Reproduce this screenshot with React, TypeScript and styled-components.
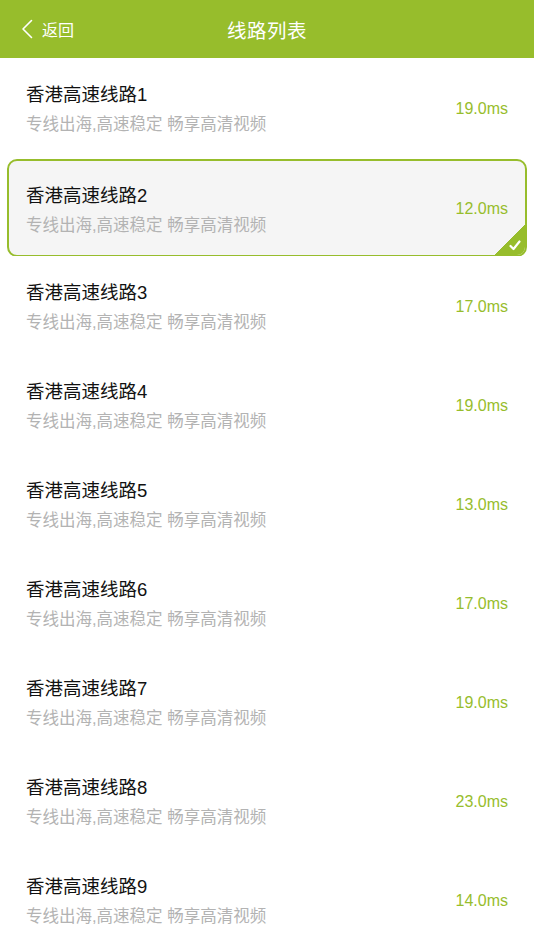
import React, { useState } from "react";
import styled, { createGlobalStyle } from "styled-components";

const GREEN = "#97bd2c";

const GlobalStyle = createGlobalStyle`
  html, body {
    margin: 0;
    padding: 0;
    background: #ffffff;
    font-family: "Liberation Sans", "Noto Sans CJK SC", sans-serif;
  }
`;

const StPage = styled.div`
  width: 534px;
  min-height: 950px;
  background: #ffffff;
`;

const StHeader = styled.header`
  height: 58px;
  background: ${GREEN};
  display: grid;
  grid-template-columns: 120px 1fr 120px;
  align-items: center;
  color: #ffffff;
`;

const StBack = styled.div`
  display: flex;
  align-items: center;
  gap: 9px;
  padding-left: 21px;
  font-size: 16px;
`;

const StTitle = styled.h1`
  margin: 0;
  text-align: center;
  font-size: 19.5px;
  font-weight: 400;
  letter-spacing: 0.5px;
`;

const StList = styled.ul`
  list-style: none;
  margin: 0;
  padding: 0;
`;

const StRow = styled.li<{ $selected: boolean }>`
  height: 99px;
  box-sizing: border-box;
  padding: ${(p) => (p.$selected ? "2px 7px 0" : "0")};
`;

const StItem = styled.div<{ $selected: boolean }>`
  position: relative;
  height: ${(p) => (p.$selected ? "98px" : "100%")};
  box-sizing: border-box;
  display: flex;
  align-items: center;
  justify-content: space-between;
  padding: ${(p) => (p.$selected ? "0 17px" : "0 26px")};
  border: ${(p) => (p.$selected ? `2px solid ${GREEN}` : "none")};
  border-radius: ${(p) => (p.$selected ? "10px" : "0")};
  background: ${(p) => (p.$selected ? "#f5f5f5" : "#ffffff")};
  overflow: hidden;
`;

const StText = styled.div`
  display: flex;
  flex-direction: column;
  gap: 6px;
  margin-top: 3px;
`;

const StName = styled.div`
  font-size: 18.5px;
  line-height: 24px;
  color: #111111;
`;

const StDesc = styled.div`
  font-size: 16.5px;
  line-height: 22px;
  color: #b3b3b3;
`;

const StPing = styled.div`
  font-size: 16px;
  color: ${GREEN};
  margin-top: 2px;
`;

const StCorner = styled.div`
  position: absolute;
  right: 0;
  bottom: 0;
  width: 30px;
  height: 30px;
  background: linear-gradient(135deg, transparent 50%, ${GREEN} 50%);
  display: flex;
  align-items: flex-end;
  justify-content: flex-end;
  padding: 0 4px 4px 0;
  box-sizing: border-box;
`;

const lines = [
  { name: "香港高速线路1", ping: "19.0ms" },
  { name: "香港高速线路2", ping: "12.0ms" },
  { name: "香港高速线路3", ping: "17.0ms" },
  { name: "香港高速线路4", ping: "19.0ms" },
  { name: "香港高速线路5", ping: "13.0ms" },
  { name: "香港高速线路6", ping: "17.0ms" },
  { name: "香港高速线路7", ping: "19.0ms" },
  { name: "香港高速线路8", ping: "23.0ms" },
  { name: "香港高速线路9", ping: "14.0ms" },
];

function ChevronLeft() {
  return (
    <svg width="12" height="20" viewBox="0 0 12 20">
      <path d="M10.5 1.5 L2 10 L10.5 18.5" fill="none" stroke="#fff" strokeWidth="1.6" strokeLinecap="round" strokeLinejoin="round" />
    </svg>
  );
}

function Check() {
  return (
    <svg width="12" height="11" viewBox="0 0 12 11">
      <path d="M1.5 6 L4.5 9 L10.5 1.5" fill="none" stroke="#fff" strokeWidth="2.2" strokeLinecap="round" strokeLinejoin="round" />
    </svg>
  );
}

export default function App() {
  const [selected, setSelected] = useState(1);

  return (
    <StPage>
      <GlobalStyle />
      <StHeader>
        <StBack>
          <ChevronLeft />
          <span>返回</span>
        </StBack>
        <StTitle>线路列表</StTitle>
        <div />
      </StHeader>
      <StList>
        {lines.map((line, index) => {
          const isSel = index === selected;
          return (
            <StRow key={line.name} $selected={isSel} onClick={() => setSelected(index)}>
              <StItem $selected={isSel}>
                <StText>
                  <StName>{line.name}</StName>
                  <StDesc>专线出海,高速稳定 畅享高清视频</StDesc>
                </StText>
                <StPing>{line.ping}</StPing>
                {isSel && (
                  <StCorner>
                    <Check />
                  </StCorner>
                )}
              </StItem>
            </StRow>
          );
        })}
      </StList>
    </StPage>
  );
}
